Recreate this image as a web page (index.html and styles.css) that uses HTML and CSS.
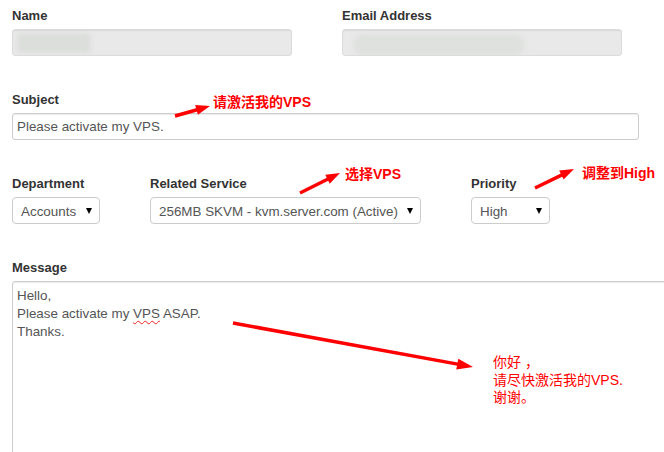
FILE: index.html
```html
<!DOCTYPE html>
<html>
<head>
<meta charset="utf-8">
<link rel="stylesheet" href="styles.css">
</head>
<body>
<div class="page">
  <div class="row two">
    <div class="group">
      <label>Name</label>
      <div class="input disabled"><span class="blob blob-name"></span></div>
    </div>
    <div class="group">
      <label>Email Address</label>
      <div class="input disabled"><span class="blob blob-email"></span></div>
    </div>
  </div>
  <div class="group">
    <label>Subject</label>
    <div class="input subject">Please activate my VPS.</div>
  </div>
  <div class="row three">
    <div class="group">
      <label>Department</label>
      <div class="select"><span>Accounts</span><i class="caret"></i></div>
    </div>
    <div class="group">
      <label>Related Service</label>
      <div class="select"><span>256MB SKVM - kvm.server.com (Active)</span><i class="caret"></i></div>
    </div>
    <div class="group">
      <label>Priority</label>
      <div class="select"><span>High</span><i class="caret"></i></div>
    </div>
  </div>
  <div class="group">
    <label>Message</label>
    <div class="textarea">Hello,<br>Please activate my <span class="spell">VPS</span> ASAP.<br>Thanks.</div>
  </div>
</div>

<svg class="arrows" width="664" height="452" viewBox="0 0 664 452">
  <g stroke="#ff0000" stroke-width="3.5" stroke-linecap="butt" fill="none">
    <line x1="175" y1="116" x2="198" y2="109.5"/>
    <line x1="300" y1="193" x2="328.5" y2="178.8"/>
    <line x1="535" y1="188" x2="562.5" y2="174.6"/>
    <line x1="233" y1="323" x2="459" y2="364.4"/>
  </g>
  <g fill="#ff0000">
    <polygon points="210,106 197.9,114.65 195.2,105.05"/>
    <polygon points="340,173 329.7,183.8 325.3,174.8"/>
    <polygon points="574,169 563.6,179.6 559.2,170.6"/>
    <polygon points="473,367 456.3,369.5 458.3,358.7"/>
  </g>
</svg>

<div class="note note-subject">请激活我的VPS</div>
<div class="note note-service">选择VPS</div>
<div class="note note-priority">调整到High</div>
<div class="note note-message">你好 ，<br>请尽快激活我的VPS.<br>谢谢。</div>
</body>
</html>
```
FILE: styles.css
```css
html, body {
  margin: 0;
  padding: 0;
}
body {
  width: 664px;
  height: 452px;
  overflow: hidden;
  position: relative;
  background: #fff;
  font-family: "Liberation Sans", Arial, "Noto Sans CJK SC", sans-serif;
  font-size: 13px;
  color: #555;
}
.page {
  padding: 7px 0 0 12px;
  display: flex;
  flex-direction: column;
  gap: 35px;
}
.row {
  display: grid;
}
.row.two {
  grid-template-columns: 280px 280px;
  column-gap: 50px;
}
.row.three {
  grid-template-columns: 88px 271px 79px;
  column-gap: 50px;
}
.group {
  display: flex;
  flex-direction: column;
  gap: 4px;
}
label {
  font-weight: bold;
  color: #333;
  line-height: 18px;
  white-space: nowrap;
}
.input,
.select,
.textarea {
  font-size: 13.4px;
}
.input {
  box-sizing: border-box;
  height: 27px;
  border: 1px solid #ccc;
  border-radius: 3px;
  padding: 0 4px;
  line-height: 25px;
  background: #fff;
  box-shadow: inset 0 1px 1px rgba(0,0,0,0.075);
  display: flex;
  align-items: center;
  overflow: hidden;
}
.input.subject {
  width: 627px;
}
.input.disabled {
  background: #e9e9e9;
  border-color: #dcdcdc;
  padding: 0;
}
.blob {
  display: block;
  background: #dcdedc;
  filter: blur(2px);
}
.blob-name {
  width: 74px;
  height: 20px;
  margin-left: 4px;
  border-radius: 4px;
}
.blob-email {
  width: 172px;
  height: 22px;
  margin-left: 10px;
  margin-top: 4px;
  border-radius: 10px;
  background: #dfe1df;
}
.select {
  box-sizing: border-box;
  height: 27px;
  border: 1px solid #ccc;
  border-radius: 4px;
  background: #fff;
  display: flex;
  align-items: center;
  justify-content: space-between;
  padding: 1px 7px 0 8px;
  white-space: nowrap;
}
.caret {
  display: block;
  width: 0;
  height: 0;
  border-left: 3px solid transparent;
  border-right: 3px solid transparent;
  border-top: 6px solid #000;
}
.textarea {
  box-sizing: border-box;
  width: 700px;
  height: 220px;
  border: 1px solid #ccc;
  border-radius: 3px;
  box-shadow: inset 0 1px 1px rgba(0,0,0,0.075);
  padding: 5px 4px;
  line-height: 18px;
}
.spell {
  text-decoration: underline wavy #e22;
  text-decoration-thickness: 1px;
  text-underline-offset: 2px;
}
.arrows {
  position: absolute;
  left: 0;
  top: 0;
  pointer-events: none;
}
.note {
  position: absolute;
  color: #ff0000;
  font-family: "Liberation Sans", Arial, "Noto Sans CJK SC", sans-serif;
  font-size: 14px;
  font-weight: bold;
  line-height: 18px;
  white-space: nowrap;
}
.note-subject {
  left: 213px;
  top: 93px;
}
.note-service {
  left: 345px;
  top: 165px;
}
.note-priority {
  left: 582px;
  top: 164px;
}
.note-message {
  left: 493px;
  top: 354px;
  font-weight: normal;
  line-height: 17.5px;
}
```
